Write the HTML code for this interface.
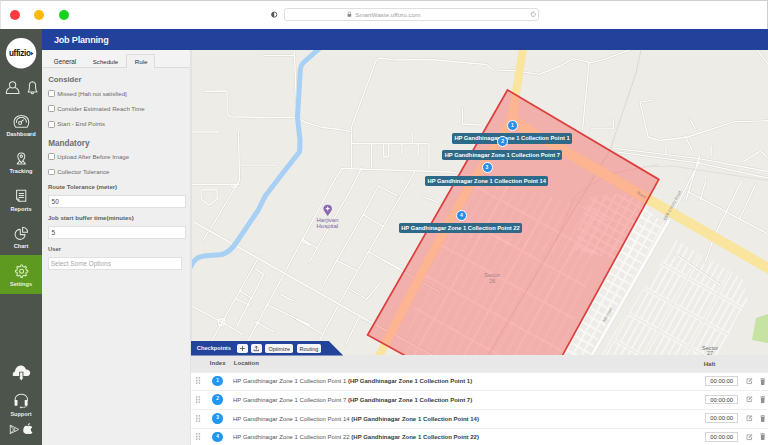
<!DOCTYPE html>
<html><head><meta charset="utf-8">
<style>
*{box-sizing:border-box;margin:0;padding:0}
html,body{width:768px;height:445px;overflow:hidden;background:#fff;font-family:"Liberation Sans",sans-serif}
.abs{position:absolute}
#chrome{left:0;top:0;width:768px;height:29.4px;background:#fff;border-top:1px solid #cfcfcf;border-left:1px solid #e4e4e4;border-right:1px solid #cfcfcf}
.dot{position:absolute;width:10px;height:10px;border-radius:50%;top:8.6px}
#addr{left:283px;top:7px;width:255px;height:12.5px;border:1px solid #dedede;border-radius:3px;background:#fff}
#addr .t{position:absolute;left:70.3px;top:1.7px;font-size:6.2px;color:#a0a0a0;white-space:nowrap}
#side{left:0;top:29.4px;width:42px;height:416px;background:#4c544c}
#hdr{left:42px;top:29.4px;width:726px;height:20.6px;background:#22419a}
#hdr .t{position:absolute;left:11.9px;top:5.8px;font-size:9.1px;letter-spacing:-0.2px;font-weight:bold;color:#f4f6fc;white-space:nowrap}
#panel{left:42px;top:50px;width:148px;height:395px;background:#efefef}
#shadow{left:190px;top:50px;width:2px;height:395px;background:#e2e2e2}
#map{left:192px;top:50px;width:576px;height:306px;background:#edece7;overflow:hidden}
.lbl{position:absolute;white-space:nowrap}
.nav{position:absolute;left:0;width:42px;text-align:center;color:#f2f2f2;font-size:5.6px;font-weight:bold}
.cb{position:absolute;left:6px;width:6.8px;height:6.8px;background:#fff;border:0.8px solid #a6a6a6;border-radius:1.3px}
.cbl{position:absolute;left:15.3px;font-size:6.1px;color:#6c6c6c;white-space:nowrap}
.flbl{position:absolute;left:6px;font-size:6.05px;font-weight:bold;color:#5e5e5e;white-space:nowrap}
.inp{position:absolute;left:5.5px;height:13px;background:#fff;border:0.6px solid #e0e0e0}
.inp span{position:absolute;left:3.1px;top:2.1px;font-size:6.6px;color:#505050;white-space:nowrap}
.row{position:absolute;left:0;width:577px;height:18.6px;border-top:0.6px solid #efefef}
.idx{position:absolute;left:21.2px;top:3.1px;width:10.6px;height:10.6px;border-radius:50%;background:#2196f3;color:#fff;font-size:4.8px;font-weight:bold;text-align:center;line-height:10.6px}
.loc{position:absolute;left:42px;top:5.7px;font-size:6px;color:#555;white-space:nowrap}
.loc b{color:#3a3a3a}
.halt{position:absolute;left:514.2px;top:3.6px;width:33px;height:9.6px;border:0.6px solid #d6d6d6;background:#fff;font-size:5.85px;color:#333;line-height:9px;text-align:center}
.btn{position:absolute;top:343.6px;height:9.1px;background:#f6f6f6;border-radius:1.8px}
.btn span{position:absolute;left:0;right:0;top:2px;text-align:center;font-size:5.45px;color:#333;white-space:nowrap}
.mlbl{position:absolute;height:10.3px;padding:0 2.4px;background:#2e6a87;border-radius:1.8px;color:#fff;font-size:5.75px;font-weight:bold;line-height:10.3px;white-space:nowrap}
.mk{position:absolute;width:11px;height:11px;border-radius:50%;background:#2a8ee6;border:0.9px solid #fff;color:#fff;font-size:5px;font-weight:bold;text-align:center;line-height:9.4px}
</style></head><body>
<div id="chrome" class="abs">
  <div class="dot" style="left:9px;background:#fd3c40"></div>
  <div class="dot" style="left:33.4px;background:#fdb90f"></div>
  <div class="dot" style="left:58px;background:#17d31c"></div>
  <div id="addr" class="abs"><span class="t">SmartWaste.uffizio.com</span></div>
</div>
<svg class="abs" style="left:0;top:0" width="768" height="29" viewBox="0 0 768 29">
 <circle cx="274.2" cy="14.6" r="2.6" fill="none" stroke="#555" stroke-width="0.9"/>
 <path d="M274.2 12 A2.6 2.6 0 0 0 274.2 17.2 Z" fill="#555"/>
 <rect x="347.6" y="14" width="3.6" height="2.8" rx="0.4" fill="#8a8a8a"/>
 <path d="M348.3 14 L348.3 13 A1.1 1.1 0 0 1 350.5 13 L350.5 14" fill="none" stroke="#8a8a8a" stroke-width="0.6"/>
 <path d="M535.2 13.1 A2.2 2.2 0 1 1 533.4 12.1" fill="none" stroke="#9a9a9a" stroke-width="0.6"/>
 <path d="M533.2 11.2 L534.4 12.2 L533.1 13.1" fill="none" stroke="#9a9a9a" stroke-width="0.6"/>
</svg>
<div id="side" class="abs"></div>
<div class="abs" style="left:0;top:255px;width:42px;height:38.5px;background:#5e9a1f"></div>
<svg class="abs" style="left:0;top:0" width="42" height="445" viewBox="0 0 42 445">
 <circle cx="21.1" cy="53.2" r="15.2" fill="#fff"/>
 <text x="8.9" y="56" font-family="Liberation Sans" font-size="8.2" font-weight="bold" letter-spacing="-0.35" fill="#151515">uffizio</text>
 <path d="M31.2 52 L33.4 53.6 L31.2 55.2 Z" fill="#151515"/>
 <g fill="none" stroke="#e0e5dd" stroke-width="1.05" stroke-linecap="round" stroke-linejoin="round">
  <circle cx="12.6" cy="84.8" r="3.1"/>
  <path d="M10.3 87.4 C7.5 88.3 6.3 90.3 6.3 93.4 L19 93.4 C19 90.3 17.8 88.3 15 87.4"/>
  <path d="M28.2 91.9 C29.2 90.6 29.4 89.4 29.4 87.4 L29.4 85.6 C29.4 83.4 30.8 82 32.4 81.8 C34.2 82 35.6 83.4 35.6 85.6 L35.6 87.4 C35.6 89.4 35.8 90.6 37 91.9 Z"/>
  <path d="M31.2 92.6 C31.4 94 33.4 94 33.6 92.6"/>
  <path d="M15.7 127.3 C14.5 125.6 14 123.8 14 122 C14 118 17.3 115.5 21.4 115.5 C25.5 115.5 28.8 118 28.8 122 C28.8 123.8 28.3 125.6 27.1 127.3 Z"/>
  <path d="M16.4 122.4 C16.4 119.2 18.6 117.4 21.4 117.4 C24.2 117.4 26.4 119.2 26.4 122.4" stroke-dasharray="1.6 0.7"/>
  <circle cx="20.1" cy="122.9" r="1.5"/>
  <path d="M21.2 121.8 L23.2 119.8"/>
  <path d="M21.3 162.8 C19.2 160.2 17.8 158.6 17.8 156.5 C17.8 154.4 19.3 152.9 21.3 152.9 C23.3 152.9 24.8 154.4 24.8 156.5 C24.8 158.6 23.4 160.2 21.3 162.8 Z"/>
  <circle cx="21.3" cy="156.3" r="1.2"/>
  <path d="M19.4 161.2 L17.2 163.9 L25.4 163.9 L23.2 161.2"/>
  <path d="M16.6 190.3 L25.8 190.3 L25.8 201.3 L18.9 201.3 L16.6 199 Z"/>
  <path d="M16.6 199 L18.9 199 L18.9 201.3"/>
  <path d="M19.2 193.5 L23.6 193.5 M19.2 195.5 L23.6 195.5 M19.2 197.4 L23.6 197.4"/>
  <path d="M20.3 229.4 A5 5 0 1 0 25.1 234.6 L20.3 234.6 Z"/>
  <path d="M22.6 227.3 A5 5 0 0 1 27.6 232.2 L22.6 232.2 Z"/>
  <path d="M15.2 400.5 L15.2 398.8 A6.1 4.6 0 0 1 27.4 398.8 L27.4 400.5"/>
  
 </g>
 <g fill="none" stroke="#d9eec2" stroke-width="1.05" stroke-linejoin="round">
  <path d="M26.38 270.13 L27.76 270.46 L27.76 271.94 L26.38 272.27 L25.74 273.83 L26.48 275.03 L25.43 276.08 L24.23 275.34 L22.67 275.98 L22.34 277.36 L20.86 277.36 L20.53 275.98 L18.97 275.34 L17.77 276.08 L16.72 275.03 L17.46 273.83 L16.82 272.27 L15.44 271.94 L15.44 270.46 L16.82 270.13 L17.46 268.57 L16.72 267.37 L17.77 266.32 L18.97 267.06 L20.53 266.42 L20.86 265.04 L22.34 265.04 L22.67 266.42 L24.23 267.06 L25.43 266.32 L26.48 267.37 L25.74 268.57 Z"/>
  <circle cx="21.6" cy="271.2" r="2"/>
 </g>
 <g fill="#f4f6f2">
  <path d="M13.3 375.9 C12.4 375.6 12.6 371.6 15 371.4 C15.2 368.4 17.4 365.4 20.8 365.4 C23.6 365.4 25.4 367.2 26 369.4 C28.8 369.4 30.2 371.2 30.2 372.8 C30.2 374.8 29 375.9 27.6 375.9 Z"/>
  <rect x="14.6" y="400" width="2.9" height="5.7" rx="0.6"/>
  <rect x="24.7" y="400" width="2.9" height="5.7" rx="0.6"/>
  <path d="M23.2 431 C23.2 427.6 24.6 425.8 26.4 425.8 C27.2 425.8 27.6 426.2 28.1 426.2 C28.6 426.2 29 425.8 29.8 425.8 C31 425.8 31.8 426.6 32.2 427.4 C31.2 428 30.8 428.9 30.8 429.8 C30.8 431 31.5 431.8 32.4 432.2 C32 433.2 31.2 434 30.4 434 C29.8 434 29.4 433.7 28.6 433.7 C27.8 433.7 27.4 434 26.8 434 C25 434 23.2 432.6 23.2 431 Z"/>
  <path d="M27.8 425.4 C27.8 424.2 28.6 423.1 29.8 422.9 C29.9 424.1 29.1 425.2 27.8 425.4 Z"/>
 </g>
 <path d="M19.2 371.8 L23.4 371.8 L23.4 376.6 L24.3 376.6 L21.3 380.9 L18.3 376.6 L19.2 376.6 Z" fill="#4c544c"/>
 <path d="M20.1 372.6 L22.5 372.6 L22.5 377.4 L23.4 377.4 L21.3 380.6 L19.2 377.4 L20.1 377.4 Z" fill="#f4f6f2"/>
 <g fill="none" stroke="#e4e8e1" stroke-width="0.85" stroke-linecap="round" stroke-linejoin="round">
  <path d="M26.8 405.6 C26.8 407.2 24.6 407.4 21.4 407.4"/>
  <circle cx="20.9" cy="407.4" r="0.6" fill="#e4e8e1"/>
  <path d="M10.3 425.6 L10.3 433.6 L18.4 429.6 Z"/>
  <path d="M10.3 425.6 L15.4 431.2 M10.3 433.6 L15.4 428"/>
 </g>
</svg>
<div class="nav" style="top:131px">Dashboard</div>
<div class="nav" style="top:168px">Tracking</div>
<div class="nav" style="top:205.7px">Reports</div>
<div class="nav" style="top:243px">Chart</div>
<div class="nav" style="top:280.7px;color:#e8f3dc">Settings</div>
<div class="nav" style="top:410.6px;font-size:5.5px;color:#e9ece7">Support</div>

<div id="hdr" class="abs"><span class="t">Job Planning</span></div>
<div id="panel" class="abs">
 <div class="abs" style="left:0;top:0;width:148px;height:18px;background:#f4f3f3;border-bottom:1px solid #dcdcdc"></div>
 <div class="abs" style="left:84px;top:4.3px;width:29.3px;height:14.2px;background:#f1f1f1;border:1px solid #dcdcdc;border-bottom:none;border-radius:1.5px 1.5px 0 0"></div>
 <span class="lbl" style="left:11.8px;top:8.3px;font-size:6.3px;color:#2e2e2e">General</span>
 <span class="lbl" style="left:50.8px;top:8.4px;font-size:6.1px;color:#2e2e2e">Schedule</span>
 <span class="lbl" style="left:92.7px;top:8.3px;font-size:6.2px;color:#2e2e2e">Rule</span>
 <span class="lbl" style="left:6.2px;top:25.2px;font-size:7.7px;font-weight:bold;color:#6e6e6e">Consider</span>
 <span class="lbl" style="left:6.2px;top:88.5px;font-size:8.2px;font-weight:bold;color:#6e6e6e">Mandatory</span>
</div>
<div class="abs" style="left:42px;top:0;width:148px;height:445px">
 <div class="cb" style="top:90.2px"></div><span class="cbl" style="top:89.6px">Missed [Halt not satisfied]</span>
 <div class="cb" style="top:105.4px"></div><span class="cbl" style="top:104.8px">Consider Estimated Reach Time</span>
 <div class="cb" style="top:121px"></div><span class="cbl" style="top:120.4px">Start - End Points</span>
 <div class="cb" style="top:153.2px"></div><span class="cbl" style="top:152.6px">Upload After Before Image</span>
 <div class="cb" style="top:168.5px"></div><span class="cbl" style="top:167.9px">Collector Tolerance</span>
 <span class="flbl" style="top:183.6px">Route Tolerance (meter)</span>
 <div class="inp" style="top:194.8px;width:138px"><span>50</span></div>
 <span class="flbl" style="top:215px">Job start buffer time(minutes)</span>
 <div class="inp" style="top:225.6px;width:138px"><span>5</span></div>
 <span class="flbl" style="top:246px;font-size:5.9px">User</span>
 <div class="inp" style="top:256.6px;width:134px"><span style="color:#a8a8a8;font-size:6.4px;left:2.3px;top:2.7px">Select Some Options</span></div>
</div>

<div id="shadow" class="abs"></div>
<div id="map" class="abs"></div>
<svg class="abs" style="left:0;top:0" width="768" height="445" viewBox="0 0 768 445">
 <defs>
  <clipPath id="polyc"><path d="M507.5 90 L658.8 179.4 L526 422 L367.6 335 Z"/></clipPath>
  <clipPath id="mc"><rect x="192" y="50" width="576" height="306"/></clipPath>
  <pattern id="blk" width="35" height="60" patternUnits="userSpaceOnUse" patternTransform="translate(672,236) rotate(29)">
   <g fill="none" stroke="#fbfbfa" stroke-width="0.85"><rect x="0.4" y="0.4" width="6" height="27" /><rect x="6.8" y="0.4" width="6" height="27" /><rect x="13.2" y="0.4" width="6" height="27" /><rect x="19.6" y="0.4" width="6" height="27" /><rect x="26.0" y="0.4" width="6" height="27" /><rect x="0.4" y="30.4" width="6" height="27" /><rect x="6.8" y="30.4" width="6" height="27" /><rect x="13.2" y="30.4" width="6" height="27" /><rect x="19.6" y="30.4" width="6" height="27" /><rect x="26.0" y="30.4" width="6" height="27" /></g>
  </pattern>
  <pattern id="blk3" width="8" height="8" patternUnits="userSpaceOnUse" patternTransform="translate(600,240) rotate(29)">
   <rect x="0.4" y="0.4" width="7.2" height="7.2" fill="none" stroke="#fbfbfa" stroke-width="0.75"/>
  </pattern>
  <pattern id="blk2" width="44" height="34" patternUnits="userSpaceOnUse" patternTransform="translate(500,200) rotate(29)">
   <path d="M0.5 0.5 L43.5 0.5 L43.5 33.5 L0.5 33.5 Z M9 0.5 L9 33.5 M18 0.5 L18 33.5 M27 0.5 L27 33.5 M36 0.5 L36 33.5" fill="none" stroke="#fbfbfa" stroke-width="0.8"/>
  </pattern>

 </defs>
 <g clip-path="url(#mc)">
  <!-- block textures -->
  <path d="M676 240 L742 278 L748 300 L735 320 L722 356 L598 356 Z" fill="url(#blk)"/>
  <path d="M642 206 L667 226 L594 356 L562 356 L600 290 Z" fill="url(#blk3)"/>
  <path d="M440 230 L600 250 L560 356 L400 356 Z" fill="url(#blk2)" opacity="0.7"/>
  <path d="M480 175 L610 215 L590 260 L440 232 Z" fill="url(#blk2)" opacity="0.7"/>
  <path d="M590 196 L652 192 L630 262 L572 250 Z" fill="url(#blk3)" opacity="0.8"/>
  <!-- roads -->
  <g fill="none" stroke-linecap="round" stroke-linejoin="round">
   <g stroke="#d6d4cc" stroke-width="2.3" transform="translate(0.13,0.07)">
   <path d="M264 55.6 L293.6 55.6 L294.4 50 M294.4 55.6 L296 95 L298 117.5"/>
   <path d="M204.6 91.5 L225 91 Q227 91 227 93 L227 113 Q228 117 236 117 L298 117.5 L304.5 121.9 L322.5 127.5 L340 129.5 L351 131.7"/>
   <path d="M190 132 L219.2 132"/>
   <path d="M238.3 132 L239.4 180.4 L210.7 228 L203 240"/>
   <path d="M239.4 165.1 L277.1 165.1"/>
   <path d="M190 184.5 L239 184.5"/>
   <circle cx="233.1" cy="185.8" r="1.6"/>
   <path d="M201 190 L217 190 L217 199 L209 205 L201 199 Z"/>
   <path d="M380.4 57.9 L396 60 L430 59.4 L486.3 64.4 L492.6 69.8 L514.1 70.7 L539.3 74.25 L559 66.2 L573.4 58.6 L590 62.7 L603.9 59.3 L629.4 50"/>
   <path d="M380.4 57.9 Q375 60 374.8 63.5 L351.2 127.5 L351.6 168.5"/>
   <path d="M351.6 143.4 L428.8 143.4 L428.8 168.5"/>
   <path d="M371.4 143.4 L371.4 167.5 M383.6 143.4 L383.6 157 L388.6 157 L388.6 143.4 M401.8 143.4 L401.8 155 M418 143.4 L418 157 M412 132 L412 143.4"/>
   <path d="M462.4 108.4 L462.4 124 L481.5 125.2"/>
   <path d="M588.7 63.5 L582.4 130"/>
   <path d="M639.8 102.1 L653.7 99.8 M639.8 102.1 L648 136.9 L659.5 140.4 L687.3 136.9 L733.7 121.8 L768 120.7"/>
   <path d="M685 135.7 L692 150 M689.7 119.5 L695.4 128.8 M756.9 50 L768 63.9"/>
   <path d="M590 128.8 L613.2 128.8 L613.2 120.7"/>
   <path d="M613.2 148.1 L699 158.5 L768 171.4 M618 152 L699 163 L768 178 M699.5 156 L686 200 M665.8 146 L665.8 154.5 M711 146 L711 156 M743.4 161.3 L760 151 L768 158"/>
   <path d="M341.7 168.5 L450 172 L520 181"/>
   <path d="M341.7 168.5 L335.4 178 L249.2 338 L238 358"/>
   <path d="M361.4 168 L350.3 190 L309 262"/>
   <path d="M378.5 185.7 L362.9 215.1 L336.8 260 L323 285 M378.5 185.7 L397.7 195.8 M423 196.8 L439 202.9"/>
   <path d="M414.4 172 L363.6 260 L338.7 304 L320.6 338.3 L310 358"/>
   <path d="M259 256.5 L213 338.3 L203 358 M239.4 290.6 L251.8 298.4 M235 298.4 L249.6 305.2 M280 294 L293.4 300.7"/>
   <path d="M372 323 L358.8 317.3 L345.4 345"/>
   <path d="M301.8 238.5 L317 248.4 M363.8 215.1 L382.6 226 M369.2 252 L400.6 270 L440 292"/>
   <path d="M190 305 L221.5 322.1 L243.5 334.5 M266.4 304 L310 325 M255 321.2 L274 331.7 M290 315.4 L321.5 333.6"/>
   <path d="M335.9 260 L356.9 270.5 M383.6 260 L399 268.6 M301.4 240.5 L310 245"/>
   <path d="M349.2 288.7 L366.4 299.2 L381.7 281"/>
   <path d="M255 268.6 L263.6 274.3 L236.8 326"/>
   <circle cx="221.5" cy="322.1" r="3.4"/>
   <path d="M669 220 L699 162"/>
   <path d="M688 191.5 L768 234 M706 180 L700.3 199.3 M742 180 L715 234 L705 262 M755.4 184.7 L739.7 218.4 M676 255 L720 285"/>
   </g>
   <g stroke="#fdfdfc" stroke-width="1.4" transform="translate(0.13,0.07)">
   <path d="M264 55.6 L293.6 55.6 L294.4 50 M294.4 55.6 L296 95 L298 117.5"/>
   <path d="M204.6 91.5 L225 91 Q227 91 227 93 L227 113 Q228 117 236 117 L298 117.5 L304.5 121.9 L322.5 127.5 L340 129.5 L351 131.7"/>
   <path d="M190 132 L219.2 132"/>
   <path d="M238.3 132 L239.4 180.4 L210.7 228 L203 240"/>
   <path d="M239.4 165.1 L277.1 165.1"/>
   <path d="M190 184.5 L239 184.5"/>
   <circle cx="233.1" cy="185.8" r="1.6"/>
   <path d="M201 190 L217 190 L217 199 L209 205 L201 199 Z"/>
   <path d="M380.4 57.9 L396 60 L430 59.4 L486.3 64.4 L492.6 69.8 L514.1 70.7 L539.3 74.25 L559 66.2 L573.4 58.6 L590 62.7 L603.9 59.3 L629.4 50"/>
   <path d="M380.4 57.9 Q375 60 374.8 63.5 L351.2 127.5 L351.6 168.5"/>
   <path d="M351.6 143.4 L428.8 143.4 L428.8 168.5"/>
   <path d="M371.4 143.4 L371.4 167.5 M383.6 143.4 L383.6 157 L388.6 157 L388.6 143.4 M401.8 143.4 L401.8 155 M418 143.4 L418 157 M412 132 L412 143.4"/>
   <path d="M462.4 108.4 L462.4 124 L481.5 125.2"/>
   <path d="M588.7 63.5 L582.4 130"/>
   <path d="M639.8 102.1 L653.7 99.8 M639.8 102.1 L648 136.9 L659.5 140.4 L687.3 136.9 L733.7 121.8 L768 120.7"/>
   <path d="M685 135.7 L692 150 M689.7 119.5 L695.4 128.8 M756.9 50 L768 63.9"/>
   <path d="M590 128.8 L613.2 128.8 L613.2 120.7"/>
   <path d="M613.2 148.1 L699 158.5 L768 171.4 M618 152 L699 163 L768 178 M699.5 156 L686 200 M665.8 146 L665.8 154.5 M711 146 L711 156 M743.4 161.3 L760 151 L768 158"/>
   <path d="M341.7 168.5 L450 172 L520 181"/>
   <path d="M341.7 168.5 L335.4 178 L249.2 338 L238 358"/>
   <path d="M361.4 168 L350.3 190 L309 262"/>
   <path d="M378.5 185.7 L362.9 215.1 L336.8 260 L323 285 M378.5 185.7 L397.7 195.8 M423 196.8 L439 202.9"/>
   <path d="M414.4 172 L363.6 260 L338.7 304 L320.6 338.3 L310 358"/>
   <path d="M259 256.5 L213 338.3 L203 358 M239.4 290.6 L251.8 298.4 M235 298.4 L249.6 305.2 M280 294 L293.4 300.7"/>
   <path d="M372 323 L358.8 317.3 L345.4 345"/>
   <path d="M301.8 238.5 L317 248.4 M363.8 215.1 L382.6 226 M369.2 252 L400.6 270 L440 292"/>
   <path d="M190 305 L221.5 322.1 L243.5 334.5 M266.4 304 L310 325 M255 321.2 L274 331.7 M290 315.4 L321.5 333.6"/>
   <path d="M335.9 260 L356.9 270.5 M383.6 260 L399 268.6 M301.4 240.5 L310 245"/>
   <path d="M349.2 288.7 L366.4 299.2 L381.7 281"/>
   <path d="M255 268.6 L263.6 274.3 L236.8 326"/>
   <circle cx="221.5" cy="322.1" r="3.4"/>
   <path d="M669 220 L699 162"/>
   <path d="M688 191.5 L768 234 M706 180 L700.3 199.3 M742 180 L715 234 L705 262 M755.4 184.7 L739.7 218.4 M676 255 L720 285"/>
   </g>
  </g>
  <g fill="none">
   <path d="M641 50 L636 73 L610 150 L556 240 L488 356" stroke="#d6d0cc" stroke-width="0.75"/><path d="M659 164.5 L608 174 L575 196 L556 240" stroke="#d9d5d0" stroke-width="0.6"/>
   <path d="M643.3 166.7 L673.4 166.2 L768 180.5" stroke="#dcdcd8" stroke-width="0.8"/>
  </g>
  <path d="M193.6 221.7 L372.2 323 L460 370" fill="none" stroke="#dcdad3" stroke-width="2.6"/><path d="M193.6 221.7 L372.2 323 L460 370" fill="none" stroke="#fbfbf9" stroke-width="1.7"/>
  <path d="M669 220 L591.3 356" fill="none" stroke="#dcdad3" stroke-width="4"/><path d="M669 220 L591.3 356" fill="none" stroke="#fcfcfb" stroke-width="3.1"/>
  <!-- river -->
  <path d="M321 47 L303 63 Q300.5 66 300.3 70 L297.5 117.4 L300 140 L299.6 151.7 L283.4 172.3 L265.4 195.7 L258.3 210 L236 243 Q230 252 222 254.5 L204 256 Q196 257 192 264 L187 273" fill="none" stroke="#a7d0f4" stroke-width="5" stroke-linejoin="round"/>
  <!-- yellow roads -->
  <path d="M523.6 45 L518 80 L515 100 L513 113 C511 122 508 126 504 132 L468.7 188 L428.7 260 L397.6 320 L376 362" fill="none" stroke="#fae59e" stroke-width="8.2" stroke-linejoin="round"/>
  <path d="M512 114 C514 121 516 123 520 125.3 L780 275" fill="none" stroke="#fae59e" stroke-width="10.2" stroke-linejoin="round"/>
  <g clip-path="url(#polyc)"><path d="M523.6 45 L518 80 L515 100 L513 113 C511 122 508 126 504 132 L468.7 188 L428.7 260 L397.6 320 L376 362" fill="none" stroke="#fdf3bf" stroke-width="8.6" stroke-linejoin="round"/><path d="M512 114 C514 121 516 123 520 125.3 L780 275" fill="none" stroke="#fdf3bf" stroke-width="10.2" stroke-linejoin="round"/></g>
  <!-- park -->
  <path d="M756 318 L768 314 L768 343 L752 340 Z" fill="#c6e3a4"/>
  <!-- polygon -->
  <path d="M507.5 90 L658.8 179.4 L526 422 L367.6 335 Z" fill="rgba(255,35,35,0.3)" stroke="#dc3f3d" stroke-width="1.7" stroke-linejoin="miter"/>
  <text x="0" y="0" transform="translate(636.5,193.5) rotate(31)" font-family="Liberation Sans" font-size="4.2" fill="#8a7f86">Road</text>
  <text x="0" y="0" transform="translate(665.5,220.5) rotate(-61)" font-family="Liberation Sans" font-size="4" fill="#8c8c8c">GEB Colony Road</text>
  <text x="0" y="0" transform="translate(605,322) rotate(-61)" font-family="Liberation Sans" font-size="4" fill="#8c8c8c">NH road</text>
  <!-- hospital -->
  <path d="M327.7 216 C325 212.5 323.4 210.4 323.4 208.6 C323.4 206.3 325.3 204.8 327.7 204.8 C330.1 204.8 332 206.3 332 208.6 C332 210.4 330.4 212.5 327.7 216 Z" fill="#8a68ad"/>
  <path d="M327.7 206.6 L327.7 210.6 M325.7 208.6 L329.7 208.6" stroke="#fff" stroke-width="1"/>
 </g>
</svg>
<div class="mlbl" style="left:452.0px;top:133.4px">HP Gandhinagar Zone 1 Collection Point 1</div>
<div class="mlbl" style="left:442.3px;top:149.6px">HP Gandhinagar Zone 1 Collection Point 7</div>
<div class="mlbl" style="left:425.2px;top:176.2px">HP Gandhinagar Zone 1 Collection Point 14</div>
<div class="mlbl" style="left:398.8px;top:222.9px">HP Gandhinagar Zone 1 Collection Point 22</div>
<div class="mk" style="left:506.9px;top:119.6px">1</div>
<div class="mk" style="left:497.1px;top:135.8px">2</div>
<div class="mk" style="left:481.5px;top:162.2px">3</div>
<div class="mk" style="left:455.8px;top:209.5px">4</div>
<span class="lbl" style="left:316.5px;top:217.4px;font-size:6px;color:#7d67a3;line-height:6px">Harjivan<br>Hospital</span>
<span class="lbl" style="left:484.3px;top:273.3px;font-size:5.5px;color:#a08585;line-height:5.5px;text-align:center">Sector<br>26</span>
<span class="lbl" style="left:702px;top:345.5px;font-size:5.6px;color:#6f6f6f;line-height:5.8px;text-align:center">Sector<br>27</span>

<div class="abs" style="left:191px;top:355px;width:577px;height:90px;background:#fff;overflow:hidden">
 <div class="abs" style="left:0;top:0;width:577px;height:16.7px;background:#e8e8e8"></div>
 <span class="lbl" style="left:18.8px;top:5.3px;font-size:6px;font-weight:bold;color:#555">Index</span>
 <span class="lbl" style="left:42.8px;top:5.3px;font-size:6px;font-weight:bold;color:#555">Location</span>
 <span class="lbl" style="left:512.7px;top:5.1px;font-size:6.1px;font-weight:bold;color:#555">Halt</span>
<div class="row" style="top:16.70px">
  <svg class="abs" style="left:4.8px;top:4.7px" width="5" height="8" viewBox="0 0 5 8"><g fill="#a0a0a0"><rect x="0" y="0.3" width="1.4" height="1.3"/><rect x="2.7" y="0.3" width="1.4" height="1.3"/><rect x="0" y="2.9" width="1.4" height="1.3"/><rect x="2.7" y="2.9" width="1.4" height="1.3"/><rect x="0" y="5.5" width="1.4" height="1.3"/><rect x="2.7" y="5.5" width="1.4" height="1.3"/></g><path d="M0.7 1 L0.7 6.2 M3.4 1 L3.4 6.2" stroke="#d8d8d8" stroke-width="0.6"/></svg>
  <div class="idx">1</div>
  <span class="loc">HP Gandhinagar Zone 1 Collection Point 1 <b>(HP Gandhinagar Zone 1 Collection Point 1)</b></span>
  <div class="halt">00:00:00</div>
  <svg class="abs" style="left:554.5px;top:5.2px" width="7" height="7" viewBox="0 0 7 7"><path d="M4.6 0.9 L1 0.9 L1 5.6 L5.6 5.6 L5.6 3" fill="none" stroke="#9c9c9c" stroke-width="0.8"/><path d="M2.6 4 L3 2.8 L5.7 0.3 L6.5 1.1 L3.9 3.6 Z" fill="#9c9c9c"/></svg>
  <svg class="abs" style="left:568.5px;top:4.9px" width="6" height="7.5" viewBox="0 0 6 7.5"><rect x="0.3" y="0.6" width="4.8" height="0.9" fill="#8f8f8f"/><rect x="1.9" y="0" width="1.6" height="0.8" fill="#8f8f8f"/><path d="M0.8 1.9 L4.6 1.9 L4.3 7 L1.1 7 Z" fill="#8f8f8f"/></svg>
 </div>
<div class="row" style="top:35.30px">
  <svg class="abs" style="left:4.8px;top:4.7px" width="5" height="8" viewBox="0 0 5 8"><g fill="#a0a0a0"><rect x="0" y="0.3" width="1.4" height="1.3"/><rect x="2.7" y="0.3" width="1.4" height="1.3"/><rect x="0" y="2.9" width="1.4" height="1.3"/><rect x="2.7" y="2.9" width="1.4" height="1.3"/><rect x="0" y="5.5" width="1.4" height="1.3"/><rect x="2.7" y="5.5" width="1.4" height="1.3"/></g><path d="M0.7 1 L0.7 6.2 M3.4 1 L3.4 6.2" stroke="#d8d8d8" stroke-width="0.6"/></svg>
  <div class="idx">2</div>
  <span class="loc">HP Gandhinagar Zone 1 Collection Point 7 <b>(HP Gandhinagar Zone 1 Collection Point 7)</b></span>
  <div class="halt">00:00:00</div>
  <svg class="abs" style="left:554.5px;top:5.2px" width="7" height="7" viewBox="0 0 7 7"><path d="M4.6 0.9 L1 0.9 L1 5.6 L5.6 5.6 L5.6 3" fill="none" stroke="#9c9c9c" stroke-width="0.8"/><path d="M2.6 4 L3 2.8 L5.7 0.3 L6.5 1.1 L3.9 3.6 Z" fill="#9c9c9c"/></svg>
  <svg class="abs" style="left:568.5px;top:4.9px" width="6" height="7.5" viewBox="0 0 6 7.5"><rect x="0.3" y="0.6" width="4.8" height="0.9" fill="#8f8f8f"/><rect x="1.9" y="0" width="1.6" height="0.8" fill="#8f8f8f"/><path d="M0.8 1.9 L4.6 1.9 L4.3 7 L1.1 7 Z" fill="#8f8f8f"/></svg>
 </div>
<div class="row" style="top:53.90px">
  <svg class="abs" style="left:4.8px;top:4.7px" width="5" height="8" viewBox="0 0 5 8"><g fill="#a0a0a0"><rect x="0" y="0.3" width="1.4" height="1.3"/><rect x="2.7" y="0.3" width="1.4" height="1.3"/><rect x="0" y="2.9" width="1.4" height="1.3"/><rect x="2.7" y="2.9" width="1.4" height="1.3"/><rect x="0" y="5.5" width="1.4" height="1.3"/><rect x="2.7" y="5.5" width="1.4" height="1.3"/></g><path d="M0.7 1 L0.7 6.2 M3.4 1 L3.4 6.2" stroke="#d8d8d8" stroke-width="0.6"/></svg>
  <div class="idx">3</div>
  <span class="loc">HP Gandhinagar Zone 1 Collection Point 14 <b>(HP Gandhinagar Zone 1 Collection Point 14)</b></span>
  <div class="halt">00:00:00</div>
  <svg class="abs" style="left:554.5px;top:5.2px" width="7" height="7" viewBox="0 0 7 7"><path d="M4.6 0.9 L1 0.9 L1 5.6 L5.6 5.6 L5.6 3" fill="none" stroke="#9c9c9c" stroke-width="0.8"/><path d="M2.6 4 L3 2.8 L5.7 0.3 L6.5 1.1 L3.9 3.6 Z" fill="#9c9c9c"/></svg>
  <svg class="abs" style="left:568.5px;top:4.9px" width="6" height="7.5" viewBox="0 0 6 7.5"><rect x="0.3" y="0.6" width="4.8" height="0.9" fill="#8f8f8f"/><rect x="1.9" y="0" width="1.6" height="0.8" fill="#8f8f8f"/><path d="M0.8 1.9 L4.6 1.9 L4.3 7 L1.1 7 Z" fill="#8f8f8f"/></svg>
 </div>
<div class="row" style="top:72.50px">
  <svg class="abs" style="left:4.8px;top:4.7px" width="5" height="8" viewBox="0 0 5 8"><g fill="#a0a0a0"><rect x="0" y="0.3" width="1.4" height="1.3"/><rect x="2.7" y="0.3" width="1.4" height="1.3"/><rect x="0" y="2.9" width="1.4" height="1.3"/><rect x="2.7" y="2.9" width="1.4" height="1.3"/><rect x="0" y="5.5" width="1.4" height="1.3"/><rect x="2.7" y="5.5" width="1.4" height="1.3"/></g><path d="M0.7 1 L0.7 6.2 M3.4 1 L3.4 6.2" stroke="#d8d8d8" stroke-width="0.6"/></svg>
  <div class="idx">4</div>
  <span class="loc">HP Gandhinagar Zone 1 Collection Point 22 <b>(HP Gandhinagar Zone 1 Collection Point 22)</b></span>
  <div class="halt">00:00:00</div>
  <svg class="abs" style="left:554.5px;top:5.2px" width="7" height="7" viewBox="0 0 7 7"><path d="M4.6 0.9 L1 0.9 L1 5.6 L5.6 5.6 L5.6 3" fill="none" stroke="#9c9c9c" stroke-width="0.8"/><path d="M2.6 4 L3 2.8 L5.7 0.3 L6.5 1.1 L3.9 3.6 Z" fill="#9c9c9c"/></svg>
  <svg class="abs" style="left:568.5px;top:4.9px" width="6" height="7.5" viewBox="0 0 6 7.5"><rect x="0.3" y="0.6" width="4.8" height="0.9" fill="#8f8f8f"/><rect x="1.9" y="0" width="1.6" height="0.8" fill="#8f8f8f"/><path d="M0.8 1.9 L4.6 1.9 L4.3 7 L1.1 7 Z" fill="#8f8f8f"/></svg>
 </div>
</div>
<svg class="abs" style="left:191px;top:340.5px" width="153" height="15" viewBox="0 0 153 15"><path d="M0 0 L137.8 0 L152.2 14.5 L0 14.5 Z" fill="#23439a"/></svg>
<span class="lbl" style="left:196.8px;top:344.9px;font-size:5.7px;font-weight:bold;color:#f4f6fb">Checkpoints</span>
<div class="btn" style="left:236.8px;width:11.1px"><svg width="11" height="9" viewBox="0 0 11 9" style="position:absolute;left:0;top:0"><path d="M5.5 2 L5.5 7 M3 4.5 L8 4.5" stroke="#444" stroke-width="0.75"/></svg></div>
<div class="btn" style="left:251.2px;width:10.6px"><svg width="11" height="9" viewBox="0 0 11 9" style="position:absolute;left:0;top:0"><path d="M5.3 5.6 L5.3 2.2 M3.9 3.5 L5.3 2.1 L6.7 3.5 M3 5.4 L3 6.7 L7.6 6.7 L7.6 5.4" fill="none" stroke="#333" stroke-width="0.7"/></svg></div>
<div class="btn" style="left:265.2px;width:28px"><span>Optimize</span></div>
<div class="btn" style="left:296.6px;width:24.8px"><span>Routing</span></div>
</body></html>
